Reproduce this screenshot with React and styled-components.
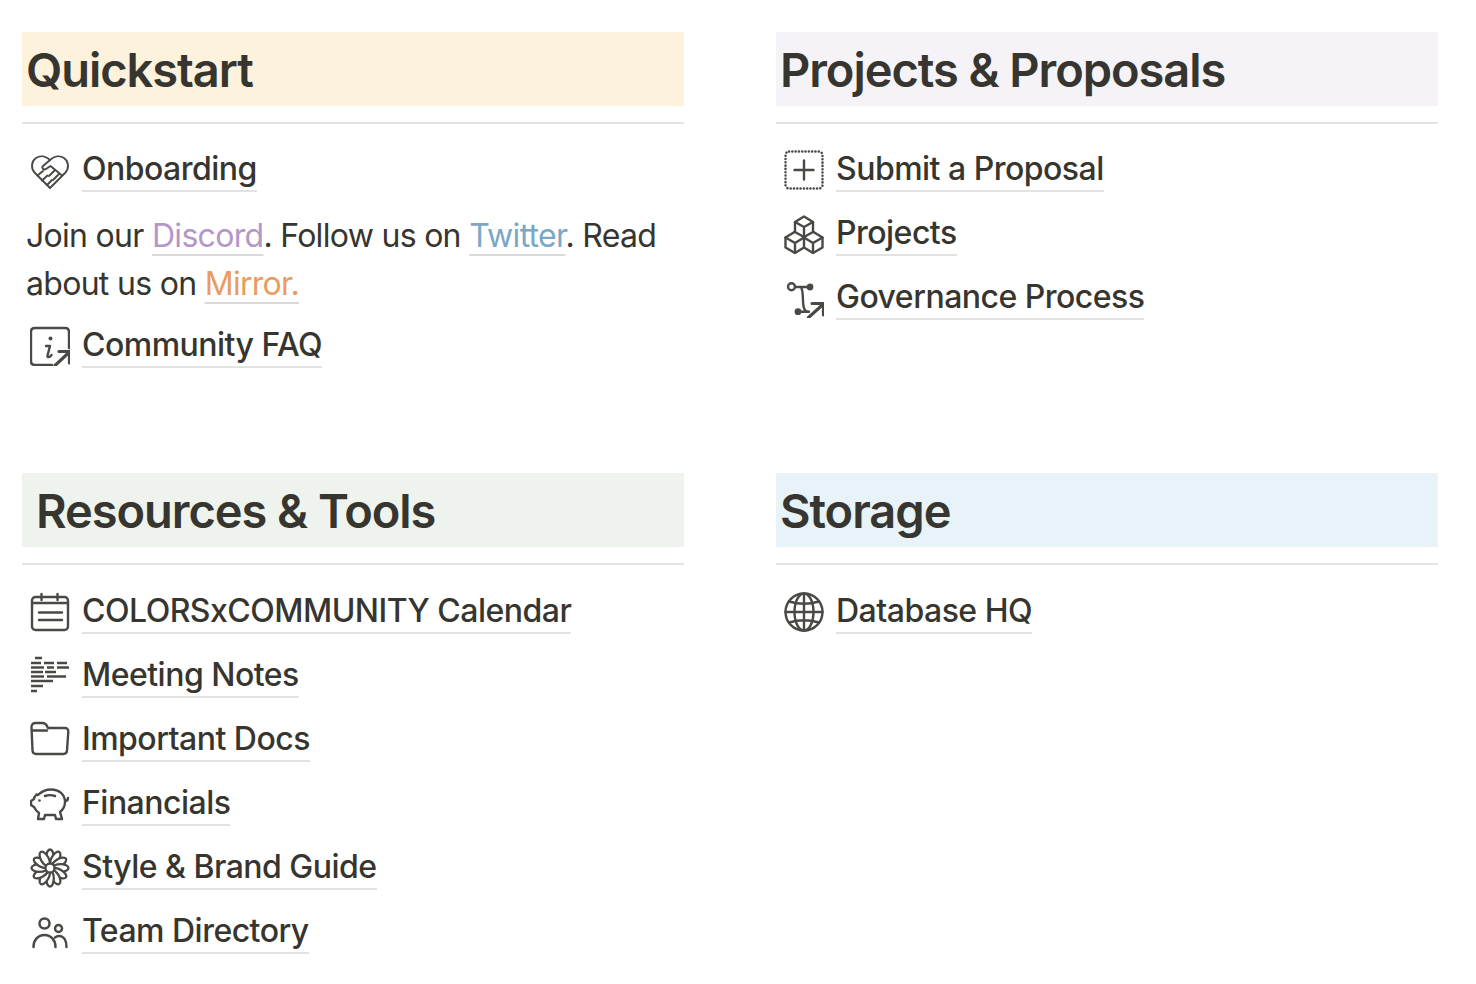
import React from "react";
import styled, { createGlobalStyle } from "styled-components";

const GlobalStyle = createGlobalStyle`
  html, body {
    margin: 0;
    padding: 0;
    background: #fff;
  }
  body {
    font-family: Inter, "Liberation Sans", sans-serif;
    color: #37352f;
  }
`;

const Page = styled.div`
  display: grid;
  grid-template-columns: 662px 662px;
  grid-template-rows: 441px auto;
  column-gap: 92px;
  padding: 32px 0 0 22px;
`;

const Section = styled.section`
  display: flex;
  flex-direction: column;
  align-items: stretch;
`;

const Heading = styled.h2`
  margin: 0;
  height: 74px;
  display: flex;
  align-items: center;
  padding-left: ${(p) => p.$indent || 4}px;
  background: ${(p) => p.$bg};
  font-size: 47px;
  font-weight: 600;
  letter-spacing: -1.05px;
`;

const Divider = styled.div`
  height: 2px;
  margin: 16px 0 ${(p) => p.$after || 14}px;
  background: #e4e4e3;
`;

const Row = styled.div`
  display: flex;
  align-items: center;
  height: 64px;
  padding-left: 8px;
  gap: 12px;
`;

const IconBox = styled.svg`
  width: 40px;
  height: 40px;
  flex: none;
  fill: none;
  stroke: #4b4945;
  stroke-width: ${(p) => p.$stroke || 2.4};
  stroke-linecap: ${(p) => p.$cap || "round"};
  stroke-linejoin: round;
`;

const PageLink = styled.a`
  display: block;
  font-size: 32px;
  line-height: 42px;
  border-bottom: 2px solid #e2e2e1;
  color: #37352f;
  font-weight: 450;
  letter-spacing: -0.52px;
`;

const Paragraph = styled.p`
  margin: 10px 0 6px;
  padding-left: 4px;
  font-size: 32px;
  line-height: 48px;
  letter-spacing: -0.7px;
`;

const InlineLink = styled.a`
  color: ${(p) => p.$color};
  text-decoration: underline 2px #d9d9d8;
  text-underline-offset: 7px;
`;

const HeartIcon = () => (
  <IconBox viewBox="0 0 40 40" $stroke={1.9}>
    <path d="M20 38 4.500 22.500C.5 18 1.500 11 6 8c4-2.800 9.500-2 14 2 4.500-4 10-4.800 14-2 4.500 3 5.500 10 1.500 14.500Z" />
    <path d="M20 10 13 16c-1.800 1.800.7 4.500 3 3l4.500-3 11.500 9.500" />
    <path d="M7.500 25.500 13 21M12 30.500l5.500-5M17 35l5-5" />
    <path d="M25 20l-6 6M29 24l-6 6" />
  </IconBox>
);

const InfoIcon = () => (
  <IconBox viewBox="0 0 40 40">
    <path d="M22 39H5c-3 0-4-1-4-4V6c0-3 1-4 4-4h30c3 0 4 1 4 4v16" />
    <path d="M16 20h4l-2.500 9.500c-.4 2 2 2.500 4-.5" />
    <circle cx="20.500" cy="12.500" r="2" fill="#4b4945" stroke="none" />
    <path d="M25 39.500 39 26.500M29 25.500h10.500V37" strokeWidth="3.200" />
  </IconBox>
);

const PlusIcon = () => (
  <IconBox viewBox="0 0 40 40">
    <rect x="1.500" y="1.500" width="37" height="37" rx="3.500" strokeDasharray="0.1 3.200" strokeWidth="2.500" />
    <path d="M10.500 20h19M20 10.500v19" />
  </IconBox>
);

const CubesIcon = () => (
  <IconBox viewBox="0 0 40 40">
    <path d="M20 2.500 29 8v10l-9 5-9-5V8Z" />
    <path d="M11 8l9 5 9-5M20 13v10" />
    <path d="M10.500 18 1.500 23.500v10l9.500 5.500 9-5.500V23" />
    <path d="M1.500 23.500 11 29l9-5.500M11 29v10" />
    <path d="M29.500 18 38.500 23.500v10L29 39l-9-5.500" />
    <path d="M20 23.500 29 29l9.500-5.500M29 29v10" />
  </IconBox>
);

const BranchIcon = () => (
  <IconBox viewBox="0 0 40 40">
    <circle cx="7.500" cy="8.700" r="3.500" />
    <circle cx="26" cy="9" r="2.200" fill="#4b4945" />
    <circle cx="14" cy="33.700" r="2.200" fill="#4b4945" />
    <path d="M11 9h15M17 9c3 5 1 16 3 21 1 3 2 3.700 5 3.700H14" />
    <path d="M24.500 39.500 39 26.500M28 25.500h11.500V37" strokeWidth="3.200" />
  </IconBox>
);

const CalendarIcon = () => (
  <IconBox viewBox="0 0 40 40">
    <rect x="2" y="5" width="36" height="33" rx="3.500" />
    <path d="M2 11h36M11.500 2v6M27.500 2v6M9 20.500h23M9 28h23" />
  </IconBox>
);

const NotesIcon = () => (
  <IconBox viewBox="0 0 40 40" $stroke={2.6} $cap="butt">
    <path d="M5 2h7M1 7h10M14 7h10M27 7h10M1 11.500h13M17 11.500h7M27 11.500h12M1 16h12M15 16h11M1 20.500h13M17 20.500h19M1 25h22M1 30h12M1 35h6" />
  </IconBox>
);

const FolderIcon = () => (
  <IconBox viewBox="0 0 40 40">
    <path d="M1.500 7c0-2.500 1.500-4 4-4h7c2 0 3.500 1 4.500 3l1 2h17c2 0 3.500 1.500 3.300 3.500L37 30.500c-.2 2.500-1.500 3.500-3.500 3.500H6c-2 0-3.300-1-3.500-3.500Z" />
    <path d="M2 10.500h15" />
  </IconBox>
);

const PiggyIcon = () => (
  <IconBox viewBox="0 0 40 40">
    <path d="M8 11C12 7 16 5.500 21 5.500c8 0 14 5 14 12.500 0 5-2.500 8-5 10l2 7h-6l-1-4H15l-1 4H8l1-6c-3-2-4-4-5-6l-3-2v-4l3-2c0-1 1-3 2.500-4.500Z" />
    <path d="M35 17c2 0 3-1 3-3M15 12c3-1 7-1 10 0" />
    <circle cx="9.500" cy="16.500" r="1.300" fill="#4b4945" stroke="none" />
  </IconBox>
);

const FlowerIcon = () => {
  const petals = [0, 30, 60, 90, 120, 150, 180, 210, 240, 270, 300, 330];
  return (
    <IconBox viewBox="0 0 40 40" $stroke={2.3}>
      {petals.map((deg) => (
        <ellipse key={deg} cx="20" cy="9.500" rx="3.800" ry="8" fill="#fff" transform={`rotate(${deg} 20 20)`} />
      ))}
      <circle cx="20" cy="20" r="4.500" fill="#fff" />
    </IconBox>
  );
};

const TeamIcon = () => (
  <IconBox viewBox="0 0 40 40" $stroke={2.5}>
    <circle cx="14.500" cy="11.500" r="5" />
    <circle cx="28.500" cy="16.500" r="3.500" />
    <path d="M3.500 35c0-7 4.500-12 11-12s11 5 11 12" />
    <path d="M25 25.500c1-.8 2.500-1.500 4-1.500 5 0 7.500 5 7.500 11" />
  </IconBox>
);

const GlobeIcon = () => (
  <IconBox viewBox="0 0 40 40">
    <circle cx="20" cy="20" r="18.500" />
    <ellipse cx="20" cy="20" rx="9.500" ry="18.500" />
    <path d="M20 1.500v37M1.500 20h37M5 9.500Q20 14 35 9.500M5 30.500Q20 26 35 30.500" />
  </IconBox>
);

const Item = ({ icon, label }) => (
  <Row>
    {icon}
    <PageLink>{label}</PageLink>
  </Row>
);

export default function App() {
  return (
    <>
      <GlobalStyle />
      <Page>
        <Section>
          <Heading $bg="#fdf2dc">Quickstart</Heading>
          <Divider />
          <Item icon={<HeartIcon />} label="Onboarding" />
          <Paragraph>
            Join our <InlineLink $color="#b596c9">Discord</InlineLink>. Follow us on{" "}
            <InlineLink $color="#7ba7c7">Twitter</InlineLink>. Read about us on{" "}
            <InlineLink $color="#e89c62">Mirror.</InlineLink>
          </Paragraph>
          <Item icon={<InfoIcon />} label="Community FAQ" />
        </Section>

        <Section>
          <Heading $bg="#f5f3f8">Projects &amp; Proposals</Heading>
          <Divider />
          <Item icon={<PlusIcon />} label="Submit a Proposal" />
          <Item icon={<CubesIcon />} label="Projects" />
          <Item icon={<BranchIcon />} label="Governance Process" />
        </Section>

        <Section>
          <Heading $bg="#eef4ed" $indent={14}>Resources &amp; Tools</Heading>
          <Divider $after={15} />
          <Item icon={<CalendarIcon />} label="COLORSxCOMMUNITY Calendar" />
          <Item icon={<NotesIcon />} label="Meeting Notes" />
          <Item icon={<FolderIcon />} label="Important Docs" />
          <Item icon={<PiggyIcon />} label="Financials" />
          <Item icon={<FlowerIcon />} label="Style & Brand Guide" />
          <Item icon={<TeamIcon />} label="Team Directory" />
        </Section>

        <Section>
          <Heading $bg="#e7f3f8">Storage</Heading>
          <Divider $after={15} />
          <Item icon={<GlobeIcon />} label="Database HQ" />
        </Section>
      </Page>
    </>
  );
}
